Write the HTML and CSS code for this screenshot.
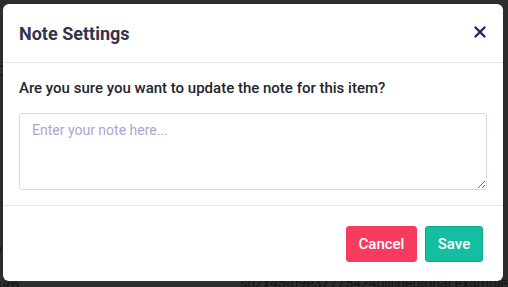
FILE: index.html
```html
<!DOCTYPE html>
<html>
<head>
<meta charset="utf-8">
<link rel="stylesheet" href="styles.css">
</head>
<body>
<div class="backdrop">
  <div class="bg-text bg-c">C</div>
  <div class="bg-text bg-e">e</div>
  <div class="bg-text bg-um">um</div>
  <div class="bg-text bg-mail">sd2x45fb9e377754240@personal.example.co</div>
</div>
<div class="modal">
  <div class="modal-header">
    <h2 class="modal-title">Note Settings</h2>
    <button class="close" aria-label="Close">
      <svg width="12" height="12" viewBox="0 0 12 12"><path d="M1.5 1.5 L10.5 10.5 M10.5 1.5 L1.5 10.5" stroke="#1c2b5a" stroke-width="2.4" stroke-linecap="round"/></svg>
    </button>
  </div>
  <div class="modal-body">
    <p class="question">Are you sure you want to update the note for this item?</p>
    <textarea class="note" placeholder="Enter your note here..."></textarea>
  </div>
  <div class="modal-footer">
    <button class="btn btn-cancel">Cancel</button>
    <button class="btn btn-save">Save</button>
  </div>
</div>
</body>
</html>
```

FILE: styles.css
```css
* { box-sizing: border-box; }
html, body {
  margin: 0;
  padding: 0;
  width: 508px;
  height: 287px;
  overflow: hidden;
  background: #2d2d2d;
  font-family: Roboto, "Liberation Sans", sans-serif;
}
.backdrop { position: absolute; inset: 0; }
.bg-text { position: absolute; color: #141414; font-size: 15px; }
.bg-c { left: -4px; top: 62px; }
.bg-e { left: -6px; top: 240px; }
.bg-um { left: -2px; top: 276px; }
.bg-mail { left: 240px; top: 275px; font-size: 14px; }
.modal {
  position: absolute;
  left: 3px;
  top: 4px;
  width: 500px;
  height: 277px;
  background: #fff;
  border-radius: 6px;
  display: flex;
  flex-direction: column;
}
.modal-header {
  height: 59px;
  display: flex;
  align-items: center;
  justify-content: space-between;
  padding: 0 16px;
  border-bottom: 1px solid #e9e7ee;
}
.modal-title {
  margin: 0;
  font-size: 18px;
  font-weight: 700;
  color: #33334f;
  padding-top: 1px;
}
.close {
  border: 0;
  background: none;
  padding: 0;
  margin-right: 1px;
  width: 12px;
  height: 12px;
  display: flex;
  margin-top: -3px;
}
.modal-body {
  padding: 15px 16px 0;
  height: 143px;
  border-bottom: 1px solid #e9e7ee;
}
.question {
  margin: 0 0 15px;
  font-size: 15px;
  font-weight: 500;
  color: #24242e;
  line-height: 20px;
}
.note {
  display: block;
  width: 468px;
  height: 77px;
  border: 1px solid #dcd6ee;
  border-radius: 3px;
  padding: 8px 12px;
  font-family: Roboto, "Liberation Sans", sans-serif;
  font-size: 14px;
  resize: vertical;
  outline: none;
}
.note::placeholder { color: #aea4d2; }
.modal-footer {
  flex: 1;
  display: flex;
  justify-content: flex-end;
  align-items: flex-start;
  gap: 8px;
  padding: 20px 20px 0;
}
.btn {
  height: 36px;
  border-radius: 3px;
  font-family: Roboto, "Liberation Sans", sans-serif;
  font-size: 15px;
  font-weight: 500;
  color: #fff;
  padding: 0;
  cursor: pointer;
}
.btn-cancel {
  background: #f73b5f;
  border: 1px solid #f73b5f;
  width: 71px;
}
.btn-save {
  background: #14bfa1;
  border: 1px solid #0fa786;
  width: 58px;
}
```
